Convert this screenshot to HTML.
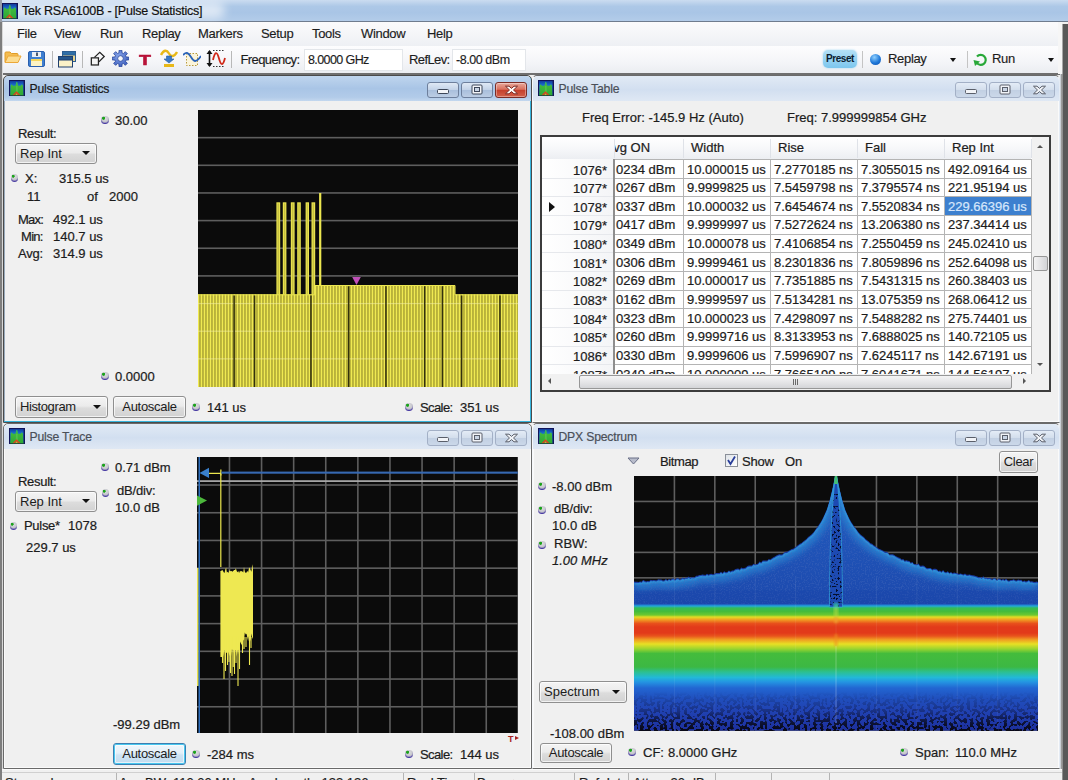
<!DOCTYPE html><html><head><meta charset="utf-8"><title>Tek RSA6100B - [Pulse Statistics]</title><style>
*{box-sizing:border-box;margin:0;padding:0}
html,body{width:1068px;height:780px;overflow:hidden;background:#f0f0f0}
body{position:relative;font-family:"Liberation Sans",sans-serif;font-size:13px;color:#1c1c1c}
.a{position:absolute;white-space:nowrap}
.t{position:absolute;white-space:nowrap;line-height:16px;height:16px;-webkit-text-stroke-width:.22px}
.ui{font-size:13px;letter-spacing:-0.32px;-webkit-text-stroke-width:.15px}
.win{position:absolute;background:#f0f0f0;border-radius:5px 5px 0 0}
.tb{position:absolute;left:0;top:0;right:0;height:25px;border-radius:5px 5px 0 0}
.wt{position:absolute;left:25.500px;top:5px;font-size:12.200px;line-height:17px;letter-spacing:-0.18px;-webkit-text-stroke:.2px currentColor}
.btn{letter-spacing:-0.3px;position:absolute;border:1px solid #8f8f8f;border-radius:3px;background:linear-gradient(#f4f4f4,#ebebeb 45%,#dcdcdc 55%,#d2d2d2);font-size:13px;line-height:18px;text-align:center;box-shadow:inset 0 0 0 1px rgba(255,255,255,.7)}
.cmb{position:absolute;border:1px solid #8f8f8f;border-radius:3px;background:linear-gradient(#f4f4f4,#ebebeb 45%,#dcdcdc 55%,#d2d2d2);font-size:13px;line-height:18px;padding-left:4px;box-shadow:inset 0 0 0 1px rgba(255,255,255,.7)}
.cmb i{position:absolute;right:6px;top:8px;width:0;height:0;border-left:4px solid transparent;border-right:4px solid transparent;border-top:4px solid #111}
.k{position:absolute;width:7.600px;height:8.200px;border-radius:50%;background:radial-gradient(circle at 32% 28%,#18a018 0,#22a422 15%,rgba(34,164,34,0) 24%),radial-gradient(circle at 50% 32%,#dcdce0 0,#c6c6cc 48%,#8c86b8 62%,#4a3ca4 74%,#4a3ca4 100%)}
.cb{position:absolute;border:1px solid #a3b0c6;border-radius:3px;height:16.500px;background:linear-gradient(#e4ecf6,#d3deec 48%,#c2d0e3 52%,#cbd8e9)}
</style></head><body>
<div class="a" style="left:0;top:0;width:1068px;height:22px;background:linear-gradient(#cbdcf0,#adc8e7 30%,#a9c5e6 60%,#b3cce9);border-bottom:1px solid #6f7c8e"></div>
<div class="a" style="left:-10px;top:2px;width:235px;height:17px;border-radius:9px;background:rgba(255,255,255,.6);filter:blur(5px)"></div>
<svg class="a" style="left:2px;top:3px" width="16" height="16" viewBox="0 0 16 16"><defs><linearGradient id="ig2_3" x1="0" y1="0" x2="0" y2="1"><stop offset="0" stop-color="#123c9c"/><stop offset=".3" stop-color="#1a70d0"/><stop offset="1" stop-color="#0f3c98"/></linearGradient><linearGradient id="gg2_3" x1="0" y1="0" x2="0" y2="1"><stop offset="0" stop-color="#34b868"/><stop offset=".3" stop-color="#40b83c"/><stop offset="1" stop-color="#2ea838"/></linearGradient></defs><rect width="16" height="16" fill="#12145a"/><rect x="1" y="1" width="13.600" height="14.200" fill="url(#ig2_3)"/><path d="M1.200 15.200 L1.700 5.600 L2.800 4.300 L3.900 5.700 L6.500 5.700 L7.100 2.400 L7.800 1.700 L8.500 2.400 L9.100 5.700 L11.700 5.700 L12.800 4.300 L13.900 5.600 L14.400 15.200 Z" fill="url(#gg2_3)"/><path d="M6.600 15 L7 5.800 L8.600 5.800 L9 15 Z" fill="#62cc54" opacity=".55"/><path d="M3.600 15.300 L7.500 11.200 L11.400 15.300 L9.600 15.300 L7.500 13.200 L5.400 15.300 Z" fill="#e23c1c"/><path d="M6.400 15.300 L7.500 13.600 L8.600 15.300 Z" fill="#f09030"/><rect x="1" y="15" width="14" height="1" fill="#1c5c28" opacity=".6"/></svg>
<div class="t" style="left:22px;top:3px;font-size:12.5px;letter-spacing:-0.22px;color:#111;-webkit-text-stroke:.2px #111">Tek RSA6100B - [Pulse Statistics]</div>
<div class="a" style="left:0;top:22px;width:1062px;height:24px;background:linear-gradient(#fbfbfc,#eef0f4)"></div>
<div class="t ui" style="left:17px;top:26px">File</div>
<div class="t ui" style="left:54px;top:26px">View</div>
<div class="t ui" style="left:100px;top:26px">Run</div>
<div class="t ui" style="left:142px;top:26px">Replay</div>
<div class="t ui" style="left:198px;top:26px">Markers</div>
<div class="t ui" style="left:261px;top:26px">Setup</div>
<div class="t ui" style="left:312px;top:26px">Tools</div>
<div class="t ui" style="left:361px;top:26px">Window</div>
<div class="t ui" style="left:427px;top:26px">Help</div>
<div class="a" style="left:0;top:46px;width:1062px;height:27px;background:linear-gradient(#fdfdfe,#f4f5f8 60%,#ebedf1)"></div>
<div class="a" style="left:0;top:73px;width:1062px;height:2px;background:#6f6f6f"></div>
<div class="a" style="left:0;top:0;width:1.500px;height:22px;background:#9a9fa8"></div>
<div class="a" style="left:0;top:22px;width:3px;height:758px;background:linear-gradient(90deg,#7e7e7e 0,#7e7e7e 55%,#d4d4d4 65%,#dcdcdc 100%)"></div>
<div class="a" style="left:1058px;top:22px;width:4px;height:52px;background:#f6f6f6"></div>
<div class="a" style="left:1060px;top:74px;width:3px;height:706px;background:linear-gradient(90deg,#e6edf6,#9c9c9c 45%,#8a8a8a)"></div>
<div class="a" style="left:1062px;top:24px;width:2px;height:50px;background:#a8a8a8"></div>
<div class="a" style="left:1063px;top:24px;width:5px;height:756px;background:#595959"></div>
<svg class="a" style="left:4px;top:50px" width="18" height="14" viewBox="0 0 18 14"><path d="M1 12 L1 3 Q1 2 2 2 L6 2 L7.5 3.5 L13 3.5 Q14 3.5 14 4.5 L14 6" fill="#f4bc50" stroke="#e09c28" stroke-width="1"/><path d="M1 12.5 L4 6 L17 6 L14 12.5 Z" fill="#fcdc90" stroke="#eca838" stroke-width="1" stroke-linejoin="round"/></svg>
<svg class="a" style="left:28px;top:51px" width="17" height="16" viewBox="0 0 17 16"><rect x=".5" y=".5" width="16" height="15" rx="1.5" fill="#3f7fd0" stroke="#2a5fae"/><rect x="4" y="1" width="9" height="5" fill="#e8eef6"/><rect x="8" y="1.5" width="2" height="3.5" fill="#4a5a70"/><rect x="3" y="8" width="11" height="7" fill="#fdf3c4"/><rect x="3" y="8" width="11" height="2" fill="#f5d65a"/></svg>
<div class="a" style="left:52px;top:51px;width:1px;height:17px;background:#b8b8b8"></div>
<svg class="a" style="left:58px;top:51px" width="18" height="17" viewBox="0 0 18 17"><rect x="4.5" y=".5" width="13" height="10" fill="#e9d690" stroke="#2d5e92"/><rect x="4.5" y=".5" width="13" height="3.5" fill="#2f6fa8" stroke="#2d5e92"/><rect x=".5" y="5.500" width="14" height="10.500" fill="#fbf1c8" stroke="#1e3f6e"/><rect x=".5" y="5.500" width="14" height="3.500" fill="#24558c" stroke="#1e3f6e"/></svg>
<div class="a" style="left:82px;top:51px;width:1px;height:17px;background:#b8b8b8"></div>
<svg class="a" style="left:90px;top:51px" width="16" height="15.5" viewBox="0 0 18 17"><rect x="1.500" y="7.500" width="8" height="8" fill="#f4f4f4" stroke="#222" stroke-width="1.400"/><path d="M5 7 L11 1.200 L16 6 L10 12" fill="none" stroke="#222" stroke-width="1.400"/></svg>
<svg class="a" style="left:112px;top:50px" width="17" height="17" viewBox="0 0 17 17"><defs><radialGradient id="gg" cx=".4" cy=".35" r=".8"><stop offset="0" stop-color="#86a4ea"/><stop offset="1" stop-color="#3052b4"/></radialGradient></defs><path d="M16.78 7.08 L16.78 9.92 L14.09 10.05 L13.55 11.36 L15.36 13.35 L13.35 15.36 L11.36 13.55 L10.05 14.09 L9.92 16.78 L7.08 16.78 L6.95 14.09 L5.64 13.55 L3.65 15.36 L1.64 13.35 L3.45 11.36 L2.91 10.05 L0.22 9.92 L0.22 7.08 L2.91 6.95 L3.45 5.64 L1.64 3.65 L3.65 1.64 L5.64 3.45 L6.95 2.91 L7.08 0.22 L9.92 0.22 L10.05 2.91 L11.36 3.45 L13.35 1.64 L15.36 3.65 L13.55 5.64 L14.09 6.95 Z" fill="url(#gg)" stroke="#27459a" stroke-width=".8"/><circle cx="8.500" cy="8.500" r="2.800" fill="#f4f6fa" stroke="#27459a" stroke-width=".8"/></svg>
<div class="a" style="left:139px;top:51px;font-size:14.500px;font-weight:bold;color:#b81238;line-height:18px;transform:scaleX(1.35);transform-origin:0 0;-webkit-text-stroke:.5px #b81238">T</div>
<svg class="a" style="left:160px;top:49px" width="18" height="19" viewBox="0 0 18 19"><path d="M1 6 C4 0 7 1 9 4.500 S14 8 17 3" fill="none" stroke="#e8b818" stroke-width="2.400"/><path d="M6.500 7 L11.500 7 L11.500 10 L14 10 L9 14 L4 10 L6.500 10 Z" fill="#3a78c8" stroke="#245a9c" stroke-width=".6"/><rect x="4" y="15" width="10" height="3" fill="#e8b818"/></svg>
<svg class="a" style="left:183px;top:50px" width="18" height="17" viewBox="0 0 18 17"><rect x="3.500" y="3.500" width="11" height="12" fill="#fbf4da" stroke="#b89a3a" stroke-dasharray="1.500 1.500"/><path d="M0 5 C3 2 5 2 8 7 S13 13 18 6" fill="none" stroke="#2a62b8" stroke-width="1.800"/></svg>
<svg class="a" style="left:206px;top:49px" width="20" height="19" viewBox="0 0 20 19"><path d="M3.500 2 L3.500 17" stroke="#111" stroke-width="1.600"/><path d="M0.500 5 L3.500 1 L6.500 5 Z M0.500 14 L3.500 18 L6.500 14 Z" fill="#111"/><path d="M7 1.500 L19 1.500 M7 17.500 L19 17.500" stroke="#333" stroke-dasharray="1.500 1.500"/><path d="M7 11 C9 2 11 2 13 9.500 S17 17 19 9" fill="none" stroke="#d02818" stroke-width="1.800"/></svg>
<div class="a" style="left:231px;top:51px;width:1px;height:17px;background:#b8b8b8"></div>
<div class="t ui" style="left:240.500px;top:51.500px;letter-spacing:-0.6px">Frequency:</div>
<div class="a" style="left:304px;top:49px;width:99px;height:22px;background:#fff;border:1px solid #e3e6ea"></div>
<div class="t ui" style="left:308px;top:52px;font-size:12.500px;letter-spacing:-0.6px">8.0000 GHz</div>
<div class="t ui" style="left:409px;top:51.500px;letter-spacing:-0.6px">RefLev:</div>
<div class="a" style="left:452px;top:49px;width:74px;height:22px;background:#fff;border:1px solid #e3e6ea"></div>
<div class="t ui" style="left:456px;top:52px;font-size:12.500px;letter-spacing:-0.45px">-8.00 dBm</div>
<div class="a" style="left:823px;top:50px;width:34px;height:18px;border-radius:5px;background:linear-gradient(#b4e0f6,#7cc6ee);box-shadow:0 0 2px #9ad4f2;font-size:10px;font-weight:bold;line-height:18px;text-align:center;color:#0c1c30;letter-spacing:-0.45px">Preset</div>
<div class="a" style="left:862px;top:51px;width:1px;height:17px;background:#c4c4c4"></div>
<div class="a" style="left:870px;top:54px;width:11px;height:11px;border-radius:50%;background:radial-gradient(circle at 40% 30%,#8fd0ff,#1f78d8 55%,#0c4fae)"></div>
<div class="t ui" style="left:888px;top:51px">Replay</div>
<div class="a" style="left:950px;top:58px;width:0;height:0;border-left:3.500px solid transparent;border-right:3.500px solid transparent;border-top:4px solid #111"></div>
<div class="a" style="left:967px;top:51px;width:1px;height:17px;background:#c4c4c4"></div>
<svg class="a" style="left:973px;top:52px" width="15" height="15" viewBox="0 0 15 15"><path d="M3.500 10.500 A5 5 0 1 0 4 4.500" fill="none" stroke="#28a838" stroke-width="2.200"/><path d="M0.500 8 L7 9.500 L2 14 Z" fill="#28a838"/></svg>
<div class="t ui" style="left:992px;top:51px">Run</div>
<div class="a" style="left:1048px;top:58px;width:0;height:0;border-left:3.500px solid transparent;border-right:3.500px solid transparent;border-top:4px solid #111"></div>
<div class="win" style="left:3px;top:75px;width:529px;height:347.7px;border:1px solid #4a4a4a;box-shadow:inset -1px -1px 0 #36b4dc, inset 1px 0 0 #9ab;"><div class="tb" style="background:linear-gradient(#bfd5ee,#a9c5e6 50%,#b2cbe9 85%,#c3d7ee)"></div><svg class="a" style="left:4.5px;top:4px" width="16" height="16" viewBox="0 0 16 16"><defs><linearGradient id="ig4.5_4" x1="0" y1="0" x2="0" y2="1"><stop offset="0" stop-color="#123c9c"/><stop offset=".3" stop-color="#1a70d0"/><stop offset="1" stop-color="#0f3c98"/></linearGradient><linearGradient id="gg4.5_4" x1="0" y1="0" x2="0" y2="1"><stop offset="0" stop-color="#34b868"/><stop offset=".3" stop-color="#40b83c"/><stop offset="1" stop-color="#2ea838"/></linearGradient></defs><rect width="16" height="16" fill="#12145a"/><rect x="1" y="1" width="13.600" height="14.200" fill="url(#ig4.5_4)"/><path d="M1.200 15.200 L1.700 5.600 L2.800 4.300 L3.900 5.700 L6.500 5.700 L7.100 2.400 L7.800 1.700 L8.500 2.400 L9.100 5.700 L11.700 5.700 L12.800 4.300 L13.900 5.600 L14.400 15.200 Z" fill="url(#gg4.5_4)"/><path d="M6.600 15 L7 5.800 L8.600 5.800 L9 15 Z" fill="#62cc54" opacity=".55"/><path d="M3.600 15.300 L7.500 11.200 L11.400 15.300 L9.600 15.300 L7.500 13.200 L5.400 15.300 Z" fill="#e23c1c"/><path d="M6.400 15.300 L7.500 13.600 L8.600 15.300 Z" fill="#f09030"/><rect x="1" y="15" width="14" height="1" fill="#1c5c28" opacity=".6"/></svg><div class="wt" style="color:#1a1a1a">Pulse Statistics</div><div class="cb" style="left:423.0px;top:5.5px;width:31.500px;border-color:#6d7f9c;background:linear-gradient(#dfe9f5,#c3d3e8 48%,#a9bfdc 52%,#bccde4)"></div><div class="cb" style="left:457.0px;top:5.5px;width:31.500px;border-color:#6d7f9c;background:linear-gradient(#dfe9f5,#c3d3e8 48%,#a9bfdc 52%,#bccde4)"></div><div class="a" style="left:491.0px;top:5.5px;width:31.500px;height:16.500px;border:1px solid #7a2b25;border-radius:3px;background:linear-gradient(#e9a99c,#d9705e 45%,#c5402c 52%,#d2604a);box-shadow:inset 0 0 0 1px rgba(255,255,255,.35)"></div><svg class="a" style="left:433.0px;top:13.0px" width="12" height="5" viewBox="0 0 12 5"><rect x=".5" y=".5" width="11" height="4" rx="1" fill="#f2f4f8" stroke="#3c4658"/></svg><svg class="a" style="left:467.0px;top:8.0px" width="12" height="11" viewBox="0 0 12 11"><rect x="1" y="1" width="10" height="9" rx="1" fill="#f2f4f8" stroke="#3c4658"/><rect x="3.500" y="3.500" width="5" height="4" fill="#c9d4e4" stroke="#3c4658"/></svg><svg class="a" style="left:499.5px;top:7.7px" width="15" height="12" viewBox="0 0 15 12"><path d="M1.500 2.200 L5 2.200 L7.500 4.400 L10 2.200 L13.500 2.200 L9.500 6 L13.500 9.800 L10 9.800 L7.500 7.600 L5 9.800 L1.500 9.800 L5.500 6 Z" fill="#fff" stroke="#7a2b25" stroke-width="1" stroke-linejoin="round"/></svg></div>
<div class="win" style="left:532px;top:75px;width:528px;height:347.7px;border:1px solid #6a6a6a;box-shadow:inset -1px -1px 0 #fafafa, inset 1px 0 0 #fafafa;border-left-color:#f6f8fb;border-right-color:#e4ebf4;"><div class="tb" style="background:linear-gradient(#e1eaf5,#d2dff0 55%,#dfe8f4)"></div><svg class="a" style="left:4.5px;top:4px" width="16" height="16" viewBox="0 0 16 16"><defs><linearGradient id="ig4.5_4" x1="0" y1="0" x2="0" y2="1"><stop offset="0" stop-color="#123c9c"/><stop offset=".3" stop-color="#1a70d0"/><stop offset="1" stop-color="#0f3c98"/></linearGradient><linearGradient id="gg4.5_4" x1="0" y1="0" x2="0" y2="1"><stop offset="0" stop-color="#34b868"/><stop offset=".3" stop-color="#40b83c"/><stop offset="1" stop-color="#2ea838"/></linearGradient></defs><rect width="16" height="16" fill="#12145a"/><rect x="1" y="1" width="13.600" height="14.200" fill="url(#ig4.5_4)"/><path d="M1.200 15.200 L1.700 5.600 L2.800 4.300 L3.900 5.700 L6.500 5.700 L7.100 2.400 L7.800 1.700 L8.500 2.400 L9.100 5.700 L11.700 5.700 L12.800 4.300 L13.900 5.600 L14.400 15.200 Z" fill="url(#gg4.5_4)"/><path d="M6.600 15 L7 5.800 L8.600 5.800 L9 15 Z" fill="#62cc54" opacity=".55"/><path d="M3.600 15.300 L7.500 11.200 L11.400 15.300 L9.600 15.300 L7.500 13.200 L5.400 15.300 Z" fill="#e23c1c"/><path d="M6.400 15.300 L7.500 13.600 L8.600 15.300 Z" fill="#f09030"/><rect x="1" y="15" width="14" height="1" fill="#1c5c28" opacity=".6"/></svg><div class="wt" style="color:#4a4f58">Pulse Table</div><div class="cb" style="left:422.0px;top:5.5px;width:31.500px"></div><div class="cb" style="left:456.0px;top:5.5px;width:31.500px"></div><div class="cb" style="left:490.0px;top:5.5px;width:31.500px"></div><svg class="a" style="left:432.0px;top:13.0px" width="12" height="5" viewBox="0 0 12 5"><rect x=".5" y=".5" width="11" height="4" rx="1" fill="#f2f4f8" stroke="#5a5f6a"/></svg><svg class="a" style="left:466.0px;top:8.0px" width="12" height="11" viewBox="0 0 12 11"><rect x="1" y="1" width="10" height="9" rx="1" fill="#f2f4f8" stroke="#5a5f6a"/><rect x="3.500" y="3.500" width="5" height="4" fill="#c9d4e4" stroke="#5a5f6a"/></svg><svg class="a" style="left:498.5px;top:7.7px" width="15" height="12" viewBox="0 0 15 12"><path d="M1.500 2.200 L5 2.200 L7.500 4.400 L10 2.200 L13.500 2.200 L9.500 6 L13.500 9.800 L10 9.800 L7.500 7.600 L5 9.800 L1.500 9.800 L5.500 6 Z" fill="#f2f4f8" stroke="#5a5f6a" stroke-width="1" stroke-linejoin="round"/></svg></div>
<div class="win" style="left:3px;top:423px;width:529px;height:346.2px;border:1px solid #6a6a6a;box-shadow:inset -1px -1px 0 #fafafa, inset 1px 0 0 #fafafa;"><div class="tb" style="background:linear-gradient(#e1eaf5,#d2dff0 55%,#dfe8f4)"></div><svg class="a" style="left:4.5px;top:4px" width="16" height="16" viewBox="0 0 16 16"><defs><linearGradient id="ig4.5_4" x1="0" y1="0" x2="0" y2="1"><stop offset="0" stop-color="#123c9c"/><stop offset=".3" stop-color="#1a70d0"/><stop offset="1" stop-color="#0f3c98"/></linearGradient><linearGradient id="gg4.5_4" x1="0" y1="0" x2="0" y2="1"><stop offset="0" stop-color="#34b868"/><stop offset=".3" stop-color="#40b83c"/><stop offset="1" stop-color="#2ea838"/></linearGradient></defs><rect width="16" height="16" fill="#12145a"/><rect x="1" y="1" width="13.600" height="14.200" fill="url(#ig4.5_4)"/><path d="M1.200 15.200 L1.700 5.600 L2.800 4.300 L3.900 5.700 L6.500 5.700 L7.100 2.400 L7.800 1.700 L8.500 2.400 L9.100 5.700 L11.700 5.700 L12.800 4.300 L13.900 5.600 L14.400 15.200 Z" fill="url(#gg4.5_4)"/><path d="M6.600 15 L7 5.800 L8.600 5.800 L9 15 Z" fill="#62cc54" opacity=".55"/><path d="M3.600 15.300 L7.500 11.200 L11.400 15.300 L9.600 15.300 L7.500 13.200 L5.400 15.300 Z" fill="#e23c1c"/><path d="M6.400 15.300 L7.500 13.600 L8.600 15.300 Z" fill="#f09030"/><rect x="1" y="15" width="14" height="1" fill="#1c5c28" opacity=".6"/></svg><div class="wt" style="color:#4a4f58">Pulse Trace</div><div class="cb" style="left:423.0px;top:5.5px;width:31.500px"></div><div class="cb" style="left:457.0px;top:5.5px;width:31.500px"></div><div class="cb" style="left:491.0px;top:5.5px;width:31.500px"></div><svg class="a" style="left:433.0px;top:13.0px" width="12" height="5" viewBox="0 0 12 5"><rect x=".5" y=".5" width="11" height="4" rx="1" fill="#f2f4f8" stroke="#5a5f6a"/></svg><svg class="a" style="left:467.0px;top:8.0px" width="12" height="11" viewBox="0 0 12 11"><rect x="1" y="1" width="10" height="9" rx="1" fill="#f2f4f8" stroke="#5a5f6a"/><rect x="3.500" y="3.500" width="5" height="4" fill="#c9d4e4" stroke="#5a5f6a"/></svg><svg class="a" style="left:499.5px;top:7.7px" width="15" height="12" viewBox="0 0 15 12"><path d="M1.500 2.200 L5 2.200 L7.500 4.400 L10 2.200 L13.500 2.200 L9.500 6 L13.500 9.800 L10 9.800 L7.500 7.600 L5 9.800 L1.500 9.800 L5.500 6 Z" fill="#f2f4f8" stroke="#5a5f6a" stroke-width="1" stroke-linejoin="round"/></svg></div>
<div class="win" style="left:532px;top:423px;width:528px;height:346.2px;border:1px solid #6a6a6a;box-shadow:inset -1px -1px 0 #fafafa, inset 1px 0 0 #fafafa;border-left-color:#f6f8fb;border-right-color:#e4ebf4;"><div class="tb" style="background:linear-gradient(#e1eaf5,#d2dff0 55%,#dfe8f4)"></div><svg class="a" style="left:4.5px;top:4px" width="16" height="16" viewBox="0 0 16 16"><defs><linearGradient id="ig4.5_4" x1="0" y1="0" x2="0" y2="1"><stop offset="0" stop-color="#123c9c"/><stop offset=".3" stop-color="#1a70d0"/><stop offset="1" stop-color="#0f3c98"/></linearGradient><linearGradient id="gg4.5_4" x1="0" y1="0" x2="0" y2="1"><stop offset="0" stop-color="#34b868"/><stop offset=".3" stop-color="#40b83c"/><stop offset="1" stop-color="#2ea838"/></linearGradient></defs><rect width="16" height="16" fill="#12145a"/><rect x="1" y="1" width="13.600" height="14.200" fill="url(#ig4.5_4)"/><path d="M1.200 15.200 L1.700 5.600 L2.800 4.300 L3.900 5.700 L6.500 5.700 L7.100 2.400 L7.800 1.700 L8.500 2.400 L9.100 5.700 L11.700 5.700 L12.800 4.300 L13.900 5.600 L14.400 15.200 Z" fill="url(#gg4.5_4)"/><path d="M6.600 15 L7 5.800 L8.600 5.800 L9 15 Z" fill="#62cc54" opacity=".55"/><path d="M3.600 15.300 L7.500 11.200 L11.400 15.300 L9.600 15.300 L7.500 13.200 L5.400 15.300 Z" fill="#e23c1c"/><path d="M6.400 15.300 L7.500 13.600 L8.600 15.300 Z" fill="#f09030"/><rect x="1" y="15" width="14" height="1" fill="#1c5c28" opacity=".6"/></svg><div class="wt" style="color:#4a4f58">DPX Spectrum</div><div class="cb" style="left:422.0px;top:5.5px;width:31.500px"></div><div class="cb" style="left:456.0px;top:5.5px;width:31.500px"></div><div class="cb" style="left:490.0px;top:5.5px;width:31.500px"></div><svg class="a" style="left:432.0px;top:13.0px" width="12" height="5" viewBox="0 0 12 5"><rect x=".5" y=".5" width="11" height="4" rx="1" fill="#f2f4f8" stroke="#5a5f6a"/></svg><svg class="a" style="left:466.0px;top:8.0px" width="12" height="11" viewBox="0 0 12 11"><rect x="1" y="1" width="10" height="9" rx="1" fill="#f2f4f8" stroke="#5a5f6a"/><rect x="3.500" y="3.500" width="5" height="4" fill="#c9d4e4" stroke="#5a5f6a"/></svg><svg class="a" style="left:498.5px;top:7.7px" width="15" height="12" viewBox="0 0 15 12"><path d="M1.500 2.200 L5 2.200 L7.500 4.400 L10 2.200 L13.500 2.200 L9.500 6 L13.500 9.800 L10 9.800 L7.500 7.600 L5 9.800 L1.500 9.800 L5.500 6 Z" fill="#f2f4f8" stroke="#5a5f6a" stroke-width="1" stroke-linejoin="round"/></svg></div>
<div class="k" style="left:101px;top:115.8px"></div>
<div class="t" style="left:115px;top:112.5px;">30.00</div>
<div class="t" style="left:18px;top:125.5px;letter-spacing:-0.3px">Result:</div>
<div class="cmb" style="left:15px;top:143px;width:82px;height:21px;line-height:19px">Rep Int<i style="top:7px"></i></div>
<div class="k" style="left:10.8px;top:173.8px"></div>
<div class="t" style="left:25px;top:170.5px;">X:</div>
<div class="t" style="left:59px;top:170.5px;">315.5 us</div>
<div class="t" style="left:27px;top:189px;">11</div>
<div class="t" style="left:87px;top:189px;">of</div>
<div class="t" style="left:109px;top:189px;">2000</div>
<div class="t" style="left:18px;top:212px;letter-spacing:-0.75px">Max:</div>
<div class="t" style="left:53px;top:212px;">492.1 us</div>
<div class="t" style="left:21px;top:229px;letter-spacing:-0.7px">Min:</div>
<div class="t" style="left:53px;top:229px;">140.7 us</div>
<div class="t" style="left:18px;top:245.5px;letter-spacing:-0.25px">Avg:</div>
<div class="t" style="left:53px;top:245.5px;">314.9 us</div>
<div class="k" style="left:101px;top:372.3px"></div>
<div class="t" style="left:115px;top:369px;">0.0000</div>
<div class="cmb" style="left:15px;top:396px;width:93px;height:22px;line-height:20px"><span style="letter-spacing:-0.4px">Histogram</span><i style="top:8px"></i></div>
<div class="btn" style="left:113px;top:396px;width:73px;height:22px;line-height:20px;">Autoscale</div>
<div class="k" style="left:192px;top:402.8px"></div>
<div class="t" style="left:207px;top:399.5px;">141 us</div>
<div class="k" style="left:405px;top:402.8px"></div>
<div class="t" style="left:420px;top:399.5px;letter-spacing:-0.6px">Scale:</div>
<div class="t" style="left:460px;top:399.5px;">351 us</div>
<svg class="a" style="left:198px;top:110px" width="320" height="277" viewBox="0 0 320 277"><defs><pattern id="hs" width="3" height="8" patternUnits="userSpaceOnUse" patternTransform="translate(-0.4 0)"><rect width="3" height="8" fill="#b8b23a"/><rect x="0" width="1.150" height="8" fill="#f0ea52"/></pattern></defs><rect width="320" height="277" fill="#0b0b0b"/><rect x="0" y="26.85" width="320" height="1.600" fill="#5e5e5e"/><rect x="0" y="54.50" width="320" height="1.600" fill="#5e5e5e"/><rect x="0" y="82.15" width="320" height="1.600" fill="#5e5e5e"/><rect x="0" y="109.80" width="320" height="1.600" fill="#5e5e5e"/><rect x="0" y="137.45" width="320" height="1.600" fill="#5e5e5e"/><rect x="0" y="165.10" width="320" height="1.600" fill="#5e5e5e"/><rect x="0" y="192.75" width="320" height="1.600" fill="#5e5e5e"/><rect x="0" y="220.40" width="320" height="1.600" fill="#5e5e5e"/><rect x="0" y="248.05" width="320" height="1.600" fill="#5e5e5e"/><rect x="78.4" y="92.300" width="3.80" height="95" fill="#ece650"/><rect x="79.50" y="93.400" width="1.60" height="94" fill="#c6c040"/><rect x="84.8" y="92.300" width="3.60" height="95" fill="#ece650"/><rect x="85.90" y="93.400" width="1.40" height="94" fill="#c6c040"/><rect x="92.8" y="92.300" width="3.80" height="95" fill="#ece650"/><rect x="93.90" y="93.400" width="1.60" height="94" fill="#c6c040"/><rect x="99.2" y="92.300" width="3.60" height="95" fill="#ece650"/><rect x="100.30" y="93.400" width="1.40" height="94" fill="#c6c040"/><rect x="107.6" y="92.300" width="3.40" height="95" fill="#ece650"/><rect x="108.70" y="93.400" width="1.20" height="94" fill="#c6c040"/><rect x="113.5" y="92.300" width="3.70" height="95" fill="#ece650"/><rect x="114.60" y="93.400" width="1.50" height="94" fill="#c6c040"/><rect x="121.100" y="83" width="2.200" height="100" fill="#ece650"/><rect x="0" y="184.500" width="320" height="92.5" fill="#b8b23a"/><rect x="117" y="175.200" width="140" height="10" fill="#b8b23a"/><rect x="-0.1" y="184.5" width="1.100" height="92.5" fill="#f0ea52"/><rect x="2.9" y="184.5" width="1.100" height="92.5" fill="#f0ea52"/><rect x="5.9" y="184.5" width="1.100" height="92.5" fill="#f0ea52"/><rect x="8.9" y="184.5" width="1.100" height="92.5" fill="#f0ea52"/><rect x="11.9" y="184.5" width="1.100" height="92.5" fill="#f0ea52"/><rect x="14.9" y="184.5" width="1.100" height="92.5" fill="#f0ea52"/><rect x="17.9" y="184.5" width="1.100" height="92.5" fill="#f0ea52"/><rect x="20.9" y="184.5" width="1.100" height="92.5" fill="#f0ea52"/><rect x="23.9" y="184.5" width="1.100" height="92.5" fill="#f0ea52"/><rect x="26.9" y="184.5" width="1.100" height="92.5" fill="#f0ea52"/><rect x="29.9" y="184.5" width="1.100" height="92.5" fill="#f0ea52"/><rect x="32.9" y="184.5" width="1.100" height="92.5" fill="#f0ea52"/><rect x="35.9" y="184.5" width="1.100" height="92.5" fill="#f0ea52"/><rect x="38.9" y="184.5" width="1.100" height="92.5" fill="#f0ea52"/><rect x="41.9" y="184.5" width="1.100" height="92.5" fill="#f0ea52"/><rect x="44.9" y="184.5" width="1.100" height="92.5" fill="#f0ea52"/><rect x="47.9" y="184.5" width="1.100" height="92.5" fill="#f0ea52"/><rect x="50.9" y="184.5" width="1.100" height="92.5" fill="#f0ea52"/><rect x="53.9" y="184.5" width="1.100" height="92.5" fill="#f0ea52"/><rect x="56.9" y="184.5" width="1.100" height="92.5" fill="#f0ea52"/><rect x="59.9" y="184.5" width="1.100" height="92.5" fill="#f0ea52"/><rect x="62.9" y="184.5" width="1.100" height="92.5" fill="#f0ea52"/><rect x="65.9" y="184.5" width="1.100" height="92.5" fill="#f0ea52"/><rect x="68.9" y="184.5" width="1.100" height="92.5" fill="#f0ea52"/><rect x="71.9" y="184.5" width="1.100" height="92.5" fill="#f0ea52"/><rect x="74.9" y="184.5" width="1.100" height="92.5" fill="#f0ea52"/><rect x="77.9" y="184.5" width="1.100" height="92.5" fill="#f0ea52"/><rect x="80.9" y="184.5" width="1.100" height="92.5" fill="#f0ea52"/><rect x="83.9" y="184.5" width="1.100" height="92.5" fill="#f0ea52"/><rect x="86.9" y="184.5" width="1.100" height="92.5" fill="#f0ea52"/><rect x="89.9" y="184.5" width="1.100" height="92.5" fill="#f0ea52"/><rect x="92.9" y="184.5" width="1.100" height="92.5" fill="#f0ea52"/><rect x="95.9" y="184.5" width="1.100" height="92.5" fill="#f0ea52"/><rect x="98.9" y="184.5" width="1.100" height="92.5" fill="#f0ea52"/><rect x="101.9" y="184.5" width="1.100" height="92.5" fill="#f0ea52"/><rect x="104.9" y="184.5" width="1.100" height="92.5" fill="#f0ea52"/><rect x="107.9" y="184.5" width="1.100" height="92.5" fill="#f0ea52"/><rect x="110.9" y="184.5" width="1.100" height="92.5" fill="#f0ea52"/><rect x="113.9" y="184.5" width="1.100" height="92.5" fill="#f0ea52"/><rect x="116.9" y="175.2" width="1.100" height="101.8" fill="#f0ea52"/><rect x="119.9" y="175.2" width="1.100" height="101.8" fill="#f0ea52"/><rect x="122.9" y="175.2" width="1.100" height="101.8" fill="#f0ea52"/><rect x="125.9" y="175.2" width="1.100" height="101.8" fill="#f0ea52"/><rect x="128.9" y="175.2" width="1.100" height="101.8" fill="#f0ea52"/><rect x="131.9" y="175.2" width="1.100" height="101.8" fill="#f0ea52"/><rect x="134.9" y="175.2" width="1.100" height="101.8" fill="#f0ea52"/><rect x="137.9" y="175.2" width="1.100" height="101.8" fill="#f0ea52"/><rect x="140.9" y="175.2" width="1.100" height="101.8" fill="#f0ea52"/><rect x="143.9" y="175.2" width="1.100" height="101.8" fill="#f0ea52"/><rect x="146.9" y="175.2" width="1.100" height="101.8" fill="#f0ea52"/><rect x="149.9" y="175.2" width="1.100" height="101.8" fill="#f0ea52"/><rect x="152.9" y="175.2" width="1.100" height="101.8" fill="#f0ea52"/><rect x="155.9" y="175.2" width="1.100" height="101.8" fill="#f0ea52"/><rect x="158.9" y="175.2" width="1.100" height="101.8" fill="#f0ea52"/><rect x="161.9" y="175.2" width="1.100" height="101.8" fill="#f0ea52"/><rect x="164.9" y="175.2" width="1.100" height="101.8" fill="#f0ea52"/><rect x="167.9" y="175.2" width="1.100" height="101.8" fill="#f0ea52"/><rect x="170.9" y="175.2" width="1.100" height="101.8" fill="#f0ea52"/><rect x="173.9" y="175.2" width="1.100" height="101.8" fill="#f0ea52"/><rect x="176.9" y="175.2" width="1.100" height="101.8" fill="#f0ea52"/><rect x="179.9" y="175.2" width="1.100" height="101.8" fill="#f0ea52"/><rect x="182.9" y="175.2" width="1.100" height="101.8" fill="#f0ea52"/><rect x="185.9" y="175.2" width="1.100" height="101.8" fill="#f0ea52"/><rect x="188.9" y="175.2" width="1.100" height="101.8" fill="#f0ea52"/><rect x="191.9" y="175.2" width="1.100" height="101.8" fill="#f0ea52"/><rect x="194.9" y="175.2" width="1.100" height="101.8" fill="#f0ea52"/><rect x="197.9" y="175.2" width="1.100" height="101.8" fill="#f0ea52"/><rect x="200.9" y="175.2" width="1.100" height="101.8" fill="#f0ea52"/><rect x="203.9" y="175.2" width="1.100" height="101.8" fill="#f0ea52"/><rect x="206.9" y="175.2" width="1.100" height="101.8" fill="#f0ea52"/><rect x="209.9" y="175.2" width="1.100" height="101.8" fill="#f0ea52"/><rect x="212.9" y="175.2" width="1.100" height="101.8" fill="#f0ea52"/><rect x="215.9" y="175.2" width="1.100" height="101.8" fill="#f0ea52"/><rect x="218.9" y="175.2" width="1.100" height="101.8" fill="#f0ea52"/><rect x="221.9" y="175.2" width="1.100" height="101.8" fill="#f0ea52"/><rect x="224.9" y="175.2" width="1.100" height="101.8" fill="#f0ea52"/><rect x="227.9" y="175.2" width="1.100" height="101.8" fill="#f0ea52"/><rect x="230.9" y="175.2" width="1.100" height="101.8" fill="#f0ea52"/><rect x="233.9" y="175.2" width="1.100" height="101.8" fill="#f0ea52"/><rect x="236.9" y="175.2" width="1.100" height="101.8" fill="#f0ea52"/><rect x="239.9" y="175.2" width="1.100" height="101.8" fill="#f0ea52"/><rect x="242.9" y="175.2" width="1.100" height="101.8" fill="#f0ea52"/><rect x="245.9" y="175.2" width="1.100" height="101.8" fill="#f0ea52"/><rect x="248.9" y="175.2" width="1.100" height="101.8" fill="#f0ea52"/><rect x="251.9" y="175.2" width="1.100" height="101.8" fill="#f0ea52"/><rect x="254.9" y="175.2" width="1.100" height="101.8" fill="#f0ea52"/><rect x="257.9" y="184.5" width="1.100" height="92.5" fill="#f0ea52"/><rect x="260.9" y="184.5" width="1.100" height="92.5" fill="#f0ea52"/><rect x="263.9" y="184.5" width="1.100" height="92.5" fill="#f0ea52"/><rect x="266.9" y="184.5" width="1.100" height="92.5" fill="#f0ea52"/><rect x="269.9" y="184.5" width="1.100" height="92.5" fill="#f0ea52"/><rect x="272.9" y="184.5" width="1.100" height="92.5" fill="#f0ea52"/><rect x="275.9" y="184.5" width="1.100" height="92.5" fill="#f0ea52"/><rect x="278.9" y="184.5" width="1.100" height="92.5" fill="#f0ea52"/><rect x="281.9" y="184.5" width="1.100" height="92.5" fill="#f0ea52"/><rect x="284.9" y="184.5" width="1.100" height="92.5" fill="#f0ea52"/><rect x="287.9" y="184.5" width="1.100" height="92.5" fill="#f0ea52"/><rect x="290.9" y="184.5" width="1.100" height="92.5" fill="#f0ea52"/><rect x="293.9" y="184.5" width="1.100" height="92.5" fill="#f0ea52"/><rect x="296.9" y="184.5" width="1.100" height="92.5" fill="#f0ea52"/><rect x="299.9" y="184.5" width="1.100" height="92.5" fill="#f0ea52"/><rect x="302.9" y="184.5" width="1.100" height="92.5" fill="#f0ea52"/><rect x="305.9" y="184.5" width="1.100" height="92.5" fill="#f0ea52"/><rect x="308.9" y="184.5" width="1.100" height="92.5" fill="#f0ea52"/><rect x="311.9" y="184.5" width="1.100" height="92.5" fill="#f0ea52"/><rect x="314.9" y="184.5" width="1.100" height="92.5" fill="#f0ea52"/><rect x="317.9" y="184.5" width="1.100" height="92.5" fill="#f0ea52"/><path d="M0 184.800 H117 V175.500 H257 V184.800 H320" fill="none" stroke="#ece650" stroke-width="1"/><rect x="0" y="192.95" width="320" height="1.200" fill="#f2eea0" opacity=".55"/><rect x="0" y="220.60" width="320" height="1.200" fill="#f2eea0" opacity=".55"/><rect x="0" y="248.25" width="320" height="1.200" fill="#f2eea0" opacity=".55"/><rect x="35.4" y="185.5" width="1.500" height="91.5" fill="#33310c"/><rect x="55.8" y="185.5" width="1.500" height="91.5" fill="#33310c"/><rect x="112.2" y="185.5" width="1.500" height="91.5" fill="#33310c"/><rect x="149.9" y="176.2" width="1.500" height="100.80000000000001" fill="#33310c"/><rect x="187.2" y="176.2" width="1.500" height="100.80000000000001" fill="#33310c"/><rect x="225.9" y="176.2" width="1.500" height="100.80000000000001" fill="#33310c"/><rect x="243.6" y="176.2" width="1.500" height="100.80000000000001" fill="#33310c"/><rect x="262.9" y="185.5" width="1.500" height="91.5" fill="#33310c"/><rect x="301.2" y="185.5" width="1.500" height="91.5" fill="#33310c"/><path d="M154.200 167 L162.800 167 L158.500 175 Z" fill="#c050b8"/></svg>
<div class="k" style="left:101px;top:463.3px"></div>
<div class="t" style="left:115px;top:460px;">0.71 dBm</div>
<div class="t" style="left:18px;top:473.5px;letter-spacing:-0.3px">Result:</div>
<div class="cmb" style="left:15px;top:491px;width:82px;height:21px;line-height:19px">Rep Int<i style="top:7px"></i></div>
<div class="k" style="left:101.5px;top:489.3px"></div>
<div class="t" style="left:117px;top:482.5px;letter-spacing:-0.2px">dB/div:</div>
<div class="t" style="left:115px;top:499.5px;">10.0 dB</div>
<div class="k" style="left:9.5px;top:521.8px"></div>
<div class="t" style="left:24px;top:518px;letter-spacing:-0.3px">Pulse*</div>
<div class="t" style="left:68px;top:518px;">1078</div>
<div class="t" style="left:26px;top:539.5px;">229.7 us</div>
<div class="t" style="left:113px;top:716.5px;">-99.29 dBm</div>
<div class="btn" style="left:113px;top:743px;width:73px;height:22px;line-height:20px;border-color:#3c7fb1;box-shadow:inset 0 0 0 1px #48c8f0, inset 0 0 0 2px rgba(255,255,255,.6);background:linear-gradient(#f0f6fb,#e4f0f8 45%,#cfe4f3 55%,#c2dcef)">Autoscale</div>
<div class="k" style="left:192px;top:749.8px"></div>
<div class="t" style="left:207px;top:746.5px;">-284 ms</div>
<div class="k" style="left:405px;top:749.8px"></div>
<div class="t" style="left:420px;top:746.5px;letter-spacing:-0.6px">Scale:</div>
<div class="t" style="left:460px;top:746.5px;">144 us</div>
<div class="a" style="left:508px;top:733.500px;font-size:9px;font-weight:bold;color:#a82020;line-height:10px">T</div>
<div class="a" style="left:514.500px;top:735.500px;width:0;height:0;border-top:2.700px solid transparent;border-bottom:2.700px solid transparent;border-left:4px solid #a82020"></div>
<svg class="a" style="left:197.2px;top:457.3px" width="320.8" height="276.2" viewBox="0 0 320.8 276.2"><rect width="320.8" height="276.2" fill="#0b0b0b"/><rect x="31.66" y="0" width="1.600" height="276.2" fill="#5e5e5e"/><rect x="63.76" y="0" width="1.600" height="276.2" fill="#5e5e5e"/><rect x="95.86" y="0" width="1.600" height="276.2" fill="#5e5e5e"/><rect x="127.96" y="0" width="1.600" height="276.2" fill="#5e5e5e"/><rect x="160.06" y="0" width="1.600" height="276.2" fill="#5e5e5e"/><rect x="192.16" y="0" width="1.600" height="276.2" fill="#5e5e5e"/><rect x="224.26" y="0" width="1.600" height="276.2" fill="#5e5e5e"/><rect x="256.36" y="0" width="1.600" height="276.2" fill="#5e5e5e"/><rect x="288.46" y="0" width="1.600" height="276.2" fill="#5e5e5e"/><rect x="0" y="27.22" width="320.8" height="1.600" fill="#5e5e5e"/><rect x="0" y="54.94" width="320.8" height="1.600" fill="#5e5e5e"/><rect x="0" y="82.66" width="320.8" height="1.600" fill="#5e5e5e"/><rect x="0" y="110.38" width="320.8" height="1.600" fill="#5e5e5e"/><rect x="0" y="138.10" width="320.8" height="1.600" fill="#5e5e5e"/><rect x="0" y="165.82" width="320.8" height="1.600" fill="#5e5e5e"/><rect x="0" y="193.54" width="320.8" height="1.600" fill="#5e5e5e"/><rect x="0" y="221.26" width="320.8" height="1.600" fill="#5e5e5e"/><rect x="0" y="248.98" width="320.8" height="1.600" fill="#5e5e5e"/><rect x="0" y="23.200" width="320.8" height="1.800" fill="#a4a4a4"/><polygon points="23.4,114.1 24.2,114.1 25.0,113.1 25.8,113.5 26.7,115.3 27.5,115.9 28.3,112.6 29.1,110.6 29.9,115.4 30.7,114.8 31.5,116.0 32.4,113.3 33.2,113.9 34.0,114.2 34.8,114.1 35.6,114.7 36.4,113.7 37.3,113.0 38.1,113.1 38.9,111.2 39.7,114.0 40.5,115.3 41.3,113.9 42.1,116.0 43.0,113.7 43.8,114.5 44.6,114.1 45.4,114.6 46.2,115.4 47.0,110.1 47.8,114.6 48.7,115.9 49.5,115.4 50.3,113.7 51.1,115.5 51.9,111.6 52.7,110.5 53.6,113.0 54.4,114.8 55.2,107.2 56.0,112.1 56.0,179.8 55.2,182.0 54.4,176.4 53.6,184.8 52.7,180.7 51.9,179.5 51.1,184.2 50.3,180.6 49.5,176.8 48.7,177.6 47.8,175.4 47.0,183.8 46.2,182.4 45.4,189.5 44.6,187.4 43.8,186.2 43.0,184.5 42.1,198.2 41.3,192.8 40.5,193.7 39.7,199.8 38.9,192.9 38.1,193.5 37.3,198.4 36.4,192.9 35.6,192.7 34.8,192.6 34.0,199.3 33.2,199.7 32.4,198.1 31.5,194.5 30.7,200.0 29.9,196.0 29.1,195.5 28.3,193.5 27.5,193.3 26.7,199.9 25.8,192.7 25.0,200.0 24.2,200.0 23.4,200.0" fill="#eee852"/><rect x="24.95" y="180" width="1.100" height="26" fill="#eee852"/><rect x="26.45" y="180" width="1.100" height="42" fill="#eee852"/><rect x="27.95" y="180" width="1.100" height="34" fill="#eee852"/><rect x="29.95" y="180" width="1.100" height="28" fill="#eee852"/><rect x="31.45" y="180" width="1.100" height="25" fill="#eee852"/><rect x="32.95" y="180" width="1.100" height="36" fill="#eee852"/><rect x="34.45" y="180" width="1.100" height="39" fill="#eee852"/><rect x="35.65" y="180" width="1.100" height="30" fill="#eee852"/><rect x="36.95" y="180" width="1.100" height="37" fill="#eee852"/><rect x="38.45" y="180" width="1.100" height="26" fill="#eee852"/><rect x="40.45" y="180" width="1.100" height="49" fill="#eee852"/><rect x="41.95" y="180" width="1.100" height="32" fill="#eee852"/><rect x="44.95" y="180" width="1.100" height="16" fill="#eee852"/><rect x="46.45" y="180" width="1.100" height="12" fill="#eee852"/><rect x="48.45" y="180" width="1.100" height="10" fill="#eee852"/><rect x="51.95" y="180" width="1.100" height="28" fill="#eee852"/><rect x="53.45" y="180" width="1.100" height="11" fill="#eee852"/><path d="M11 16.400 H23.800 V110" fill="none" stroke="#ece64e" stroke-width="1.200"/><rect x="23.200" y="12.500" width="1.300" height="6" fill="#e6e04a"/><rect x="0" y="111" width="1.800" height="118" fill="#e6e04a"/><rect x="1.500" y="0" width="1.500" height="276.2" fill="#2e6fbe"/><rect x="24.400" y="14.600" width="296.40000000000003" height="2.100" fill="#3668b2"/><path d="M2.500 15.900 L12 10.700 L12 21 Z" fill="#3a80cc"/><path d="M0 38.500 L0 48.700 L10 43.600 Z" fill="#4cb83c"/></svg>
<div class="t" style="left:582px;top:109.5px;">Freq Error: -145.9 Hz (Auto)</div>
<div class="t" style="left:787px;top:109.5px;">Freq: 7.999999854 GHz</div>
<div class="a" style="left:540px;top:135px;width:511px;height:257px;background:#fff;border:2px solid #3c3c3c;overflow:hidden"><div class="a" style="left:0;top:0;width:489px;height:22px;background:linear-gradient(#ffffff,#f7f8fa 50%,#eceef2)"></div><div class="a" style="left:0;top:22px;width:72px;height:215px;background:linear-gradient(90deg,#ffffff,#f4f5f7)"></div><div class="a" style="left:403px;top:60.30px;width:86px;height:17.65px;background:#3d80cf"></div><div class="a" style="left:73px;top:3px;width:66px;height:16px;overflow:hidden"><div class="t" style="left:-1.800px;top:0">vg ON</div></div><div class="t" style="left:149px;top:3px">Width</div><div class="t" style="left:236px;top:3px">Rise</div><div class="t" style="left:323px;top:3px">Fall</div><div class="t" style="left:410px;top:3px">Rep Int</div><div class="t" style="left:0px;width:65px;text-align:right;top:25.52px">1076*</div><div class="t" style="left:74px;top:24.52px;">0234 dBm</div><div class="t" style="left:145px;top:24.52px;">10.000015 us</div><div class="t" style="left:232px;top:24.52px;">7.2770185 ns</div><div class="t" style="left:319px;top:24.52px;">7.3055015 ns</div><div class="t" style="left:406px;top:24.52px;">492.09164 us</div><div class="t" style="left:0px;width:65px;text-align:right;top:44.17px">1077*</div><div class="t" style="left:74px;top:43.17px;">0267 dBm</div><div class="t" style="left:145px;top:43.17px;">9.9999825 us</div><div class="t" style="left:232px;top:43.17px;">7.5459798 ns</div><div class="t" style="left:319px;top:43.17px;">7.3795574 ns</div><div class="t" style="left:406px;top:43.17px;">221.95194 us</div><div class="t" style="left:0px;width:65px;text-align:right;top:62.82px">1078*</div><div class="t" style="left:74px;top:61.82px;">0337 dBm</div><div class="t" style="left:145px;top:61.82px;">10.000032 us</div><div class="t" style="left:232px;top:61.82px;">7.6454674 ns</div><div class="t" style="left:319px;top:61.82px;">7.5520834 ns</div><div class="t" style="left:406px;top:61.82px;color:#d6e6fb;">229.66396 us</div><div class="t" style="left:0px;width:65px;text-align:right;top:81.47px">1079*</div><div class="t" style="left:74px;top:80.47px;">0417 dBm</div><div class="t" style="left:145px;top:80.47px;">9.9999997 us</div><div class="t" style="left:232px;top:80.47px;">7.5272624 ns</div><div class="t" style="left:319px;top:80.47px;">13.206380 ns</div><div class="t" style="left:406px;top:80.47px;">237.34414 us</div><div class="t" style="left:0px;width:65px;text-align:right;top:100.12px">1080*</div><div class="t" style="left:74px;top:99.12px;">0349 dBm</div><div class="t" style="left:145px;top:99.12px;">10.000078 us</div><div class="t" style="left:232px;top:99.12px;">7.4106854 ns</div><div class="t" style="left:319px;top:99.12px;">7.2550459 ns</div><div class="t" style="left:406px;top:99.12px;">245.02410 us</div><div class="t" style="left:0px;width:65px;text-align:right;top:118.77px">1081*</div><div class="t" style="left:74px;top:117.77px;">0306 dBm</div><div class="t" style="left:145px;top:117.77px;">9.9999461 us</div><div class="t" style="left:232px;top:117.77px;">8.2301836 ns</div><div class="t" style="left:319px;top:117.77px;">7.8059896 ns</div><div class="t" style="left:406px;top:117.77px;">252.64098 us</div><div class="t" style="left:0px;width:65px;text-align:right;top:137.42px">1082*</div><div class="t" style="left:74px;top:136.42px;">0269 dBm</div><div class="t" style="left:145px;top:136.42px;">10.000017 us</div><div class="t" style="left:232px;top:136.42px;">7.7351885 ns</div><div class="t" style="left:319px;top:136.42px;">7.5431315 ns</div><div class="t" style="left:406px;top:136.42px;">260.38403 us</div><div class="t" style="left:0px;width:65px;text-align:right;top:156.07px">1083*</div><div class="t" style="left:74px;top:155.07px;">0162 dBm</div><div class="t" style="left:145px;top:155.07px;">9.9999597 us</div><div class="t" style="left:232px;top:155.07px;">7.5134281 ns</div><div class="t" style="left:319px;top:155.07px;">13.075359 ns</div><div class="t" style="left:406px;top:155.07px;">268.06412 us</div><div class="t" style="left:0px;width:65px;text-align:right;top:174.72px">1084*</div><div class="t" style="left:74px;top:173.72px;">0323 dBm</div><div class="t" style="left:145px;top:173.72px;">10.000023 us</div><div class="t" style="left:232px;top:173.72px;">7.4298097 ns</div><div class="t" style="left:319px;top:173.72px;">7.5488282 ns</div><div class="t" style="left:406px;top:173.72px;">275.74401 us</div><div class="t" style="left:0px;width:65px;text-align:right;top:193.38px">1085*</div><div class="t" style="left:74px;top:192.38px;">0260 dBm</div><div class="t" style="left:145px;top:192.38px;">9.9999716 us</div><div class="t" style="left:232px;top:192.38px;">8.3133953 ns</div><div class="t" style="left:319px;top:192.38px;">7.6888025 ns</div><div class="t" style="left:406px;top:192.38px;">140.72105 us</div><div class="t" style="left:0px;width:65px;text-align:right;top:212.02px">1086*</div><div class="t" style="left:74px;top:211.02px;">0330 dBm</div><div class="t" style="left:145px;top:211.02px;">9.9999606 us</div><div class="t" style="left:232px;top:211.02px;">7.5996907 ns</div><div class="t" style="left:319px;top:211.02px;">7.6245117 ns</div><div class="t" style="left:406px;top:211.02px;">142.67191 us</div><div class="t" style="left:0px;width:65px;text-align:right;top:230.67px">1087*</div><div class="t" style="left:74px;top:229.67px;">0340 dBm</div><div class="t" style="left:145px;top:229.67px;">10.000009 us</div><div class="t" style="left:232px;top:229.67px;">7.7665199 ns</div><div class="t" style="left:319px;top:229.67px;">7.6041671 ns</div><div class="t" style="left:406px;top:229.67px;">144.56197 us</div><div class="a" style="left:72px;top:22.00px;width:417px;height:1px;background:#b4b4b4"></div><div class="a" style="left:72px;top:40.65px;width:417px;height:1px;background:#b4b4b4"></div><div class="a" style="left:0;top:40.65px;width:72px;height:1px;background:#e6e8ec"></div><div class="a" style="left:72px;top:59.30px;width:417px;height:1px;background:#b4b4b4"></div><div class="a" style="left:0;top:59.30px;width:72px;height:1px;background:#e6e8ec"></div><div class="a" style="left:72px;top:77.95px;width:417px;height:1px;background:#b4b4b4"></div><div class="a" style="left:0;top:77.95px;width:72px;height:1px;background:#e6e8ec"></div><div class="a" style="left:72px;top:96.60px;width:417px;height:1px;background:#b4b4b4"></div><div class="a" style="left:0;top:96.60px;width:72px;height:1px;background:#e6e8ec"></div><div class="a" style="left:72px;top:115.25px;width:417px;height:1px;background:#b4b4b4"></div><div class="a" style="left:0;top:115.25px;width:72px;height:1px;background:#e6e8ec"></div><div class="a" style="left:72px;top:133.90px;width:417px;height:1px;background:#b4b4b4"></div><div class="a" style="left:0;top:133.90px;width:72px;height:1px;background:#e6e8ec"></div><div class="a" style="left:72px;top:152.55px;width:417px;height:1px;background:#b4b4b4"></div><div class="a" style="left:0;top:152.55px;width:72px;height:1px;background:#e6e8ec"></div><div class="a" style="left:72px;top:171.20px;width:417px;height:1px;background:#b4b4b4"></div><div class="a" style="left:0;top:171.20px;width:72px;height:1px;background:#e6e8ec"></div><div class="a" style="left:72px;top:189.85px;width:417px;height:1px;background:#b4b4b4"></div><div class="a" style="left:0;top:189.85px;width:72px;height:1px;background:#e6e8ec"></div><div class="a" style="left:72px;top:208.50px;width:417px;height:1px;background:#b4b4b4"></div><div class="a" style="left:0;top:208.50px;width:72px;height:1px;background:#e6e8ec"></div><div class="a" style="left:72px;top:227.15px;width:417px;height:1px;background:#b4b4b4"></div><div class="a" style="left:0;top:227.15px;width:72px;height:1px;background:#e6e8ec"></div><div class="a" style="left:72px;top:245.80px;width:417px;height:1px;background:#b4b4b4"></div><div class="a" style="left:0;top:245.80px;width:72px;height:1px;background:#e6e8ec"></div><div class="a" style="left:72px;top:22px;width:1px;height:215px;background:#b4b4b4"></div><div class="a" style="left:72px;top:2px;width:1px;height:19px;background:#dfe2e8"></div><div class="a" style="left:141px;top:22px;width:1px;height:215px;background:#b4b4b4"></div><div class="a" style="left:141px;top:2px;width:1px;height:19px;background:#dfe2e8"></div><div class="a" style="left:228px;top:22px;width:1px;height:215px;background:#b4b4b4"></div><div class="a" style="left:228px;top:2px;width:1px;height:19px;background:#dfe2e8"></div><div class="a" style="left:315px;top:22px;width:1px;height:215px;background:#b4b4b4"></div><div class="a" style="left:315px;top:2px;width:1px;height:19px;background:#dfe2e8"></div><div class="a" style="left:402px;top:22px;width:1px;height:215px;background:#b4b4b4"></div><div class="a" style="left:402px;top:2px;width:1px;height:19px;background:#dfe2e8"></div><div class="a" style="left:489px;top:22px;width:1px;height:215px;background:#b4b4b4"></div><div class="a" style="left:489px;top:2px;width:1px;height:19px;background:#dfe2e8"></div><div class="a" style="left:71px;top:22px;width:2px;height:215px;background:#8e8e8e"></div><div class="a" style="left:7px;top:65px;width:0;height:0;border-top:5px solid transparent;border-bottom:5px solid transparent;border-left:6px solid #111"></div><div class="a" style="left:490px;top:0;width:17px;height:237px;background:#f1f1f1"></div><div class="a" style="left:495px;top:8px;width:0;height:0;border-left:3.500px solid transparent;border-right:3.500px solid transparent;border-bottom:3.500px solid #555"></div><div class="a" style="left:495px;top:226px;width:0;height:0;border-left:3.500px solid transparent;border-right:3.500px solid transparent;border-top:3.500px solid #555"></div><div class="a" style="left:491px;top:119px;width:15px;height:15px;border:1px solid #979797;border-radius:2px;background:linear-gradient(90deg,#f4f4f4,#e4e4e6 50%,#d2d3d6)"></div><div class="a" style="left:0;top:237px;width:507px;height:16px;background:#f1f1f1"></div><div class="a" style="left:6px;top:241px;width:0;height:0;border-top:3.500px solid transparent;border-bottom:3.500px solid transparent;border-right:3.500px solid #555"></div><div class="a" style="left:481px;top:241px;width:0;height:0;border-top:3.500px solid transparent;border-bottom:3.500px solid transparent;border-left:3.500px solid #555"></div><div class="a" style="left:37px;top:238px;width:433px;height:14px;border:1px solid #979797;border-radius:2px;background:linear-gradient(#f5f5f5,#e6e6e8 50%,#d4d5d8)"></div><div class="a" style="left:251px;top:242px;width:1px;height:6px;background:#6a6a6a"></div><div class="a" style="left:253px;top:242px;width:1px;height:6px;background:#6a6a6a"></div><div class="a" style="left:255px;top:242px;width:1px;height:6px;background:#6a6a6a"></div></div>
<svg class="a" style="left:627px;top:457.3px" width="13" height="8" viewBox="0 0 13 8"><path d="M1 1 L12 1 L6.500 7 Z" fill="#b8bccb" stroke="#6a7088" stroke-width="1"/></svg>
<div class="t" style="left:660px;top:454.3px;letter-spacing:-0.4px">Bitmap</div>
<div class="a" style="left:725px;top:454.300px;width:13px;height:13px;border:1px solid #8a8f98;background:linear-gradient(135deg,#dfe3e8,#ffffff)"></div>
<svg class="a" style="left:726px;top:455.3px" width="11" height="11" viewBox="0 0 11 11"><path d="M2 5 L4.500 9 L9 1.500" fill="none" stroke="#2a3e9a" stroke-width="1.800"/></svg>
<div class="t" style="left:742px;top:454.3px;letter-spacing:-0.25px">Show</div>
<div class="t" style="left:785px;top:454.3px;">On</div>
<div class="btn" style="left:999px;top:451px;width:39px;height:22px;line-height:20px;">Clear</div>
<div class="k" style="left:538px;top:482.3px"></div>
<div class="t" style="left:552px;top:478.5px;">-8.00 dBm</div>
<div class="k" style="left:538px;top:505.8px"></div>
<div class="t" style="left:554px;top:500.5px;letter-spacing:-0.2px">dB/div:</div>
<div class="t" style="left:552px;top:517.5px;">10.0 dB</div>
<div class="k" style="left:538px;top:541.3px"></div>
<div class="t" style="left:554px;top:535.5px;">RBW:</div>
<div class="t" style="left:552px;top:553px;font-style:italic">1.00 MHz</div>
<div class="cmb" style="left:539px;top:681px;width:88px;height:22px;line-height:20px">Spectrum<i style="top:8px"></i></div>
<div class="t" style="left:550px;top:725.5px;">-108.00 dBm</div>
<div class="btn" style="left:540px;top:743px;width:72px;height:20px;line-height:18px;">Autoscale</div>
<div class="k" style="left:628px;top:748.3px"></div>
<div class="t" style="left:643px;top:744.5px;">CF:</div>
<div class="t" style="left:668px;top:744.5px;">8.0000 GHz</div>
<div class="k" style="left:900px;top:748.3px"></div>
<div class="t" style="left:915px;top:744.5px;">Span:</div>
<div class="t" style="left:955px;top:744.5px;">110.0 MHz</div>
<svg class="a" style="left:634.4px;top:476.0px" width="404.1" height="254.6" viewBox="0 0 404.1 254.6"><defs>
<linearGradient id="bands" x1="0" y1="0" x2="0" y2="1"><stop offset="0.0000" stop-color="#1e50b8"/><stop offset="0.0158" stop-color="#22a8dc"/><stop offset="0.0316" stop-color="#34bc58"/><stop offset="0.0592" stop-color="#44bc3c"/><stop offset="0.0869" stop-color="#6cc830"/><stop offset="0.1027" stop-color="#e4dc24"/><stop offset="0.1264" stop-color="#f09822"/><stop offset="0.1540" stop-color="#e8501c"/><stop offset="0.1817" stop-color="#e23a1a"/><stop offset="0.2291" stop-color="#e23a1a"/><stop offset="0.2528" stop-color="#e8541c"/><stop offset="0.2804" stop-color="#f09a22"/><stop offset="0.3160" stop-color="#e8e024"/><stop offset="0.3555" stop-color="#98d430"/><stop offset="0.3910" stop-color="#44bc3c"/><stop offset="0.4976" stop-color="#3cb844"/><stop offset="0.5371" stop-color="#2cc090"/><stop offset="0.5806" stop-color="#22b8d8"/><stop offset="0.6161" stop-color="#2494e2"/><stop offset="0.6635" stop-color="#2266d2"/><stop offset="0.7504" stop-color="#204ebc"/><stop offset="0.8452" stop-color="#2042b2"/><stop offset="0.9321" stop-color="#1e38a8"/><stop offset="1.0000" stop-color="#1c2e9a"/></linearGradient>
<filter id="bl3" x="-5%" y="-20%" width="110%" height="140%"><feGaussianBlur stdDeviation="3.2"/></filter>
<filter id="bl1" x="-5%" y="-20%" width="110%" height="140%"><feGaussianBlur stdDeviation="1.1"/></filter>
<filter id="spk" x="0" y="0" width="100%" height="100%" color-interpolation-filters="sRGB"><feTurbulence type="fractalNoise" baseFrequency="0.3" numOctaves="1" seed="4"/><feColorMatrix type="matrix" values="0 0 0 0 0.03  0 0 0 0 0.03  0 0 0 0 0.08  40 0 0 0 -20.2"/></filter>
<filter id="spk3" x="0" y="0" width="100%" height="100%" color-interpolation-filters="sRGB"><feTurbulence type="fractalNoise" baseFrequency="0.5" numOctaves="2" seed="14"/><feColorMatrix type="matrix" values="0 0 0 0 0  0 0 0 0 0  0 0 0 0 0.05  10 0 0 0 -5.5"/></filter>
<filter id="spk2" x="0" y="0" width="100%" height="100%"><feTurbulence type="fractalNoise" baseFrequency="0.7" numOctaves="2" seed="9"/><feColorMatrix type="matrix" values="0 0 0 0 0.06  0 0 0 0 0.14  0 0 0 0 0.5  6 0 0 0 -3.0"/></filter>
<linearGradient id="fade" x1="0" y1="0" x2="0" y2="1"><stop offset="0" stop-color="#fff" stop-opacity="0"/><stop offset=".5" stop-color="#fff" stop-opacity=".3"/><stop offset=".78" stop-color="#fff" stop-opacity=".75"/><stop offset="1" stop-color="#fff" stop-opacity="1"/></linearGradient>
<mask id="mfade"><rect x="0" y="216" width="404.1" height="39" fill="url(#fade)"/></mask>
<clipPath id="skc"><path d="M0 131.5 L0.0 106.7 L1.5 106.9 L3.0 106.9 L4.6 107.1 L6.1 106.6 L7.6 106.9 L9.1 105.2 L10.6 105.9 L12.2 106.7 L13.7 106.1 L15.2 106.5 L16.7 105.0 L18.2 105.5 L19.8 105.1 L21.3 105.5 L22.8 105.5 L24.3 104.4 L25.8 104.7 L27.4 104.7 L28.9 105.8 L30.4 105.5 L31.9 104.3 L33.4 105.4 L35.0 104.1 L36.5 104.9 L38.0 103.9 L39.5 103.5 L41.0 104.9 L42.6 103.5 L44.1 103.3 L45.6 104.4 L47.1 104.0 L48.6 102.8 L50.2 103.8 L51.7 102.8 L53.2 102.9 L54.7 101.8 L56.2 102.9 L57.8 102.3 L59.3 102.6 L60.8 102.2 L62.3 101.0 L63.8 100.9 L65.4 100.3 L66.9 100.1 L68.4 99.7 L69.9 100.0 L71.4 100.3 L73.0 99.0 L74.5 100.0 L76.0 99.2 L77.6 98.9 L79.1 99.6 L80.7 98.7 L82.3 98.2 L83.9 98.2 L85.4 98.3 L87.0 96.9 L88.6 98.3 L90.2 96.4 L91.7 97.4 L93.3 97.3 L94.9 95.6 L96.5 96.7 L98.0 95.7 L99.6 95.8 L101.1 94.4 L102.7 94.0 L104.2 93.7 L105.7 94.7 L107.3 92.8 L108.8 93.4 L110.3 93.2 L111.8 92.8 L113.4 91.3 L114.9 90.8 L116.4 90.7 L118.0 90.7 L119.5 89.0 L121.0 89.6 L122.6 89.2 L124.1 88.8 L125.6 86.7 L127.2 87.8 L128.7 85.8 L130.2 85.7 L131.7 85.7 L133.3 85.7 L134.8 84.1 L136.3 84.6 L137.9 83.4 L139.4 82.5 L140.9 81.8 L142.4 80.8 L144.0 80.0 L145.5 79.4 L147.0 79.7 L148.5 79.5 L150.1 77.8 L151.6 77.0 L153.1 76.9 L154.6 75.9 L156.2 75.1 L157.7 74.3 L159.2 73.9 L160.9 72.8 L162.5 71.5 L164.2 70.3 L165.9 68.9 L167.5 68.3 L169.2 66.6 L170.8 65.4 L172.5 64.1 L174.1 62.2 L175.8 61.0 L177.4 59.7 L179.1 58.0 L180.6 56.1 L182.1 53.7 L183.6 51.9 L185.1 49.8 L187.1 46.7 L189.1 42.9 L191.1 38.5 L193.0 34.3 L194.5 29.2 L196.0 24.3 L198.4 14.2 L200.4 4.2 L201.2 0.0 L202.8 0.1 L203.6 4.2 L205.6 14.1 L208.0 24.3 L209.5 29.1 L211.0 34.3 L212.9 38.6 L214.9 43.0 L216.9 46.7 L218.9 49.8 L220.4 51.9 L221.9 53.6 L223.4 56.0 L224.9 58.0 L226.6 59.8 L228.2 61.0 L229.9 62.2 L231.5 64.2 L233.2 65.4 L234.8 66.7 L236.5 68.4 L238.1 68.9 L239.8 70.4 L241.5 71.4 L243.1 72.8 L244.8 73.9 L246.3 74.4 L247.8 75.1 L249.4 76.0 L250.9 76.9 L252.4 77.0 L253.9 77.6 L255.5 79.6 L257.0 79.5 L258.5 79.5 L260.0 79.9 L261.6 81.1 L263.1 81.9 L264.6 82.7 L266.1 83.3 L267.7 84.7 L269.2 84.3 L270.7 85.9 L272.3 85.5 L273.8 86.0 L275.3 86.1 L276.8 88.0 L278.4 87.1 L279.9 89.1 L281.4 89.2 L283.0 89.6 L284.5 88.7 L286.0 90.9 L287.6 91.0 L289.1 90.8 L290.6 91.4 L292.2 93.0 L293.7 93.4 L295.2 93.1 L296.7 93.1 L298.3 94.7 L299.8 93.9 L301.3 93.9 L302.9 94.5 L304.4 96.1 L306.0 95.8 L307.5 96.9 L309.1 95.2 L310.7 97.1 L312.3 97.4 L313.8 96.5 L315.4 98.1 L317.0 97.1 L318.6 98.5 L320.1 97.8 L321.7 98.1 L323.3 98.5 L324.9 99.2 L326.4 98.6 L328.0 99.1 L329.5 99.8 L331.0 98.8 L332.6 99.9 L334.1 99.9 L335.6 99.6 L337.1 100.2 L338.6 100.4 L340.2 100.7 L341.7 101.3 L343.2 101.8 L344.7 102.5 L346.2 102.1 L347.8 102.9 L349.3 101.5 L350.8 103.1 L352.3 102.7 L353.8 103.4 L355.4 102.9 L356.9 103.7 L358.4 104.5 L359.9 103.1 L361.4 103.5 L363.0 105.2 L364.5 103.8 L366.0 103.9 L367.5 105.1 L369.0 104.2 L370.6 105.3 L372.1 104.0 L373.6 105.5 L375.1 105.9 L376.6 105.1 L378.2 105.1 L379.7 104.5 L381.2 105.4 L382.7 105.8 L384.2 104.7 L385.8 105.2 L387.3 105.0 L388.8 106.6 L390.3 105.8 L391.8 106.8 L393.4 106.2 L394.9 105.1 L396.4 106.8 L397.9 106.4 L399.4 106.9 L401.0 107.3 L402.5 106.8 L404.0 107.1 L404.1 131.5 Z"/></clipPath>
<linearGradient id="sk" x1="0" y1="0" x2="0" y2="1"><stop offset="0" stop-color="#2460c2"/><stop offset=".6" stop-color="#1f52b6"/><stop offset="1" stop-color="#1c48ac"/></linearGradient>
</defs><rect width="404.1" height="254.6" fill="#0b0b0b"/><rect x="39.61" y="0" width="1.600" height="254.6" fill="#5e5e5e"/><rect x="80.02" y="0" width="1.600" height="254.6" fill="#5e5e5e"/><rect x="120.43" y="0" width="1.600" height="254.6" fill="#5e5e5e"/><rect x="160.84" y="0" width="1.600" height="254.6" fill="#5e5e5e"/><rect x="201.25" y="0" width="1.600" height="254.6" fill="#5e5e5e"/><rect x="241.66" y="0" width="1.600" height="254.6" fill="#5e5e5e"/><rect x="282.07" y="0" width="1.600" height="254.6" fill="#5e5e5e"/><rect x="322.48" y="0" width="1.600" height="254.6" fill="#5e5e5e"/><rect x="362.89" y="0" width="1.600" height="254.6" fill="#5e5e5e"/><rect x="0" y="24.66" width="404.1" height="1.600" fill="#5e5e5e"/><rect x="0" y="50.12" width="404.1" height="1.600" fill="#5e5e5e"/><rect x="0" y="75.58" width="404.1" height="1.600" fill="#5e5e5e"/><rect x="0" y="101.04" width="404.1" height="1.600" fill="#5e5e5e"/><rect x="0" y="126.50" width="404.1" height="1.600" fill="#5e5e5e"/><rect x="0" y="151.96" width="404.1" height="1.600" fill="#5e5e5e"/><rect x="0" y="177.42" width="404.1" height="1.600" fill="#5e5e5e"/><rect x="0" y="202.88" width="404.1" height="1.600" fill="#5e5e5e"/><rect x="0" y="228.34" width="404.1" height="1.600" fill="#5e5e5e"/><path d="M0 131.5 L0.0 106.7 L1.5 106.9 L3.0 106.9 L4.6 107.1 L6.1 106.6 L7.6 106.9 L9.1 105.2 L10.6 105.9 L12.2 106.7 L13.7 106.1 L15.2 106.5 L16.7 105.0 L18.2 105.5 L19.8 105.1 L21.3 105.5 L22.8 105.5 L24.3 104.4 L25.8 104.7 L27.4 104.7 L28.9 105.8 L30.4 105.5 L31.9 104.3 L33.4 105.4 L35.0 104.1 L36.5 104.9 L38.0 103.9 L39.5 103.5 L41.0 104.9 L42.6 103.5 L44.1 103.3 L45.6 104.4 L47.1 104.0 L48.6 102.8 L50.2 103.8 L51.7 102.8 L53.2 102.9 L54.7 101.8 L56.2 102.9 L57.8 102.3 L59.3 102.6 L60.8 102.2 L62.3 101.0 L63.8 100.9 L65.4 100.3 L66.9 100.1 L68.4 99.7 L69.9 100.0 L71.4 100.3 L73.0 99.0 L74.5 100.0 L76.0 99.2 L77.6 98.9 L79.1 99.6 L80.7 98.7 L82.3 98.2 L83.9 98.2 L85.4 98.3 L87.0 96.9 L88.6 98.3 L90.2 96.4 L91.7 97.4 L93.3 97.3 L94.9 95.6 L96.5 96.7 L98.0 95.7 L99.6 95.8 L101.1 94.4 L102.7 94.0 L104.2 93.7 L105.7 94.7 L107.3 92.8 L108.8 93.4 L110.3 93.2 L111.8 92.8 L113.4 91.3 L114.9 90.8 L116.4 90.7 L118.0 90.7 L119.5 89.0 L121.0 89.6 L122.6 89.2 L124.1 88.8 L125.6 86.7 L127.2 87.8 L128.7 85.8 L130.2 85.7 L131.7 85.7 L133.3 85.7 L134.8 84.1 L136.3 84.6 L137.9 83.4 L139.4 82.5 L140.9 81.8 L142.4 80.8 L144.0 80.0 L145.5 79.4 L147.0 79.7 L148.5 79.5 L150.1 77.8 L151.6 77.0 L153.1 76.9 L154.6 75.9 L156.2 75.1 L157.7 74.3 L159.2 73.9 L160.9 72.8 L162.5 71.5 L164.2 70.3 L165.9 68.9 L167.5 68.3 L169.2 66.6 L170.8 65.4 L172.5 64.1 L174.1 62.2 L175.8 61.0 L177.4 59.7 L179.1 58.0 L180.6 56.1 L182.1 53.7 L183.6 51.9 L185.1 49.8 L187.1 46.7 L189.1 42.9 L191.1 38.5 L193.0 34.3 L194.5 29.2 L196.0 24.3 L198.4 14.2 L200.4 4.2 L201.2 0.0 L202.8 0.1 L203.6 4.2 L205.6 14.1 L208.0 24.3 L209.5 29.1 L211.0 34.3 L212.9 38.6 L214.9 43.0 L216.9 46.7 L218.9 49.8 L220.4 51.9 L221.9 53.6 L223.4 56.0 L224.9 58.0 L226.6 59.8 L228.2 61.0 L229.9 62.2 L231.5 64.2 L233.2 65.4 L234.8 66.7 L236.5 68.4 L238.1 68.9 L239.8 70.4 L241.5 71.4 L243.1 72.8 L244.8 73.9 L246.3 74.4 L247.8 75.1 L249.4 76.0 L250.9 76.9 L252.4 77.0 L253.9 77.6 L255.5 79.6 L257.0 79.5 L258.5 79.5 L260.0 79.9 L261.6 81.1 L263.1 81.9 L264.6 82.7 L266.1 83.3 L267.7 84.7 L269.2 84.3 L270.7 85.9 L272.3 85.5 L273.8 86.0 L275.3 86.1 L276.8 88.0 L278.4 87.1 L279.9 89.1 L281.4 89.2 L283.0 89.6 L284.5 88.7 L286.0 90.9 L287.6 91.0 L289.1 90.8 L290.6 91.4 L292.2 93.0 L293.7 93.4 L295.2 93.1 L296.7 93.1 L298.3 94.7 L299.8 93.9 L301.3 93.9 L302.9 94.5 L304.4 96.1 L306.0 95.8 L307.5 96.9 L309.1 95.2 L310.7 97.1 L312.3 97.4 L313.8 96.5 L315.4 98.1 L317.0 97.1 L318.6 98.5 L320.1 97.8 L321.7 98.1 L323.3 98.5 L324.9 99.2 L326.4 98.6 L328.0 99.1 L329.5 99.8 L331.0 98.8 L332.6 99.9 L334.1 99.9 L335.6 99.6 L337.1 100.2 L338.6 100.4 L340.2 100.7 L341.7 101.3 L343.2 101.8 L344.7 102.5 L346.2 102.1 L347.8 102.9 L349.3 101.5 L350.8 103.1 L352.3 102.7 L353.8 103.4 L355.4 102.9 L356.9 103.7 L358.4 104.5 L359.9 103.1 L361.4 103.5 L363.0 105.2 L364.5 103.8 L366.0 103.9 L367.5 105.1 L369.0 104.2 L370.6 105.3 L372.1 104.0 L373.6 105.5 L375.1 105.9 L376.6 105.1 L378.2 105.1 L379.7 104.5 L381.2 105.4 L382.7 105.8 L384.2 104.7 L385.8 105.2 L387.3 105.0 L388.8 106.6 L390.3 105.8 L391.8 106.8 L393.4 106.2 L394.9 105.1 L396.4 106.8 L397.9 106.4 L399.4 106.9 L401.0 107.3 L402.5 106.8 L404.0 107.1 L404.1 131.5 Z" fill="#1a3ca4" transform="translate(0 -1.2)"/><g clip-path="url(#skc)"><rect x="0" y="0" width="404.1" height="131.5" fill="url(#sk)"/><path d="M0.0 106.7 L1.5 106.9 L3.0 106.9 L4.6 107.1 L6.1 106.6 L7.6 106.9 L9.1 105.2 L10.6 105.9 L12.2 106.7 L13.7 106.1 L15.2 106.5 L16.7 105.0 L18.2 105.5 L19.8 105.1 L21.3 105.5 L22.8 105.5 L24.3 104.4 L25.8 104.7 L27.4 104.7 L28.9 105.8 L30.4 105.5 L31.9 104.3 L33.4 105.4 L35.0 104.1 L36.5 104.9 L38.0 103.9 L39.5 103.5 L41.0 104.9 L42.6 103.5 L44.1 103.3 L45.6 104.4 L47.1 104.0 L48.6 102.8 L50.2 103.8 L51.7 102.8 L53.2 102.9 L54.7 101.8 L56.2 102.9 L57.8 102.3 L59.3 102.6 L60.8 102.2 L62.3 101.0 L63.8 100.9 L65.4 100.3 L66.9 100.1 L68.4 99.7 L69.9 100.0 L71.4 100.3 L73.0 99.0 L74.5 100.0 L76.0 99.2 L77.6 98.9 L79.1 99.6 L80.7 98.7 L82.3 98.2 L83.9 98.2 L85.4 98.3 L87.0 96.9 L88.6 98.3 L90.2 96.4 L91.7 97.4 L93.3 97.3 L94.9 95.6 L96.5 96.7 L98.0 95.7 L99.6 95.8 L101.1 94.4 L102.7 94.0 L104.2 93.7 L105.7 94.7 L107.3 92.8 L108.8 93.4 L110.3 93.2 L111.8 92.8 L113.4 91.3 L114.9 90.8 L116.4 90.7 L118.0 90.7 L119.5 89.0 L121.0 89.6 L122.6 89.2 L124.1 88.8 L125.6 86.7 L127.2 87.8 L128.7 85.8 L130.2 85.7 L131.7 85.7 L133.3 85.7 L134.8 84.1 L136.3 84.6 L137.9 83.4 L139.4 82.5 L140.9 81.8 L142.4 80.8 L144.0 80.0 L145.5 79.4 L147.0 79.7 L148.5 79.5 L150.1 77.8 L151.6 77.0 L153.1 76.9 L154.6 75.9 L156.2 75.1 L157.7 74.3 L159.2 73.9 L160.9 72.8 L162.5 71.5 L164.2 70.3 L165.9 68.9 L167.5 68.3 L169.2 66.6 L170.8 65.4 L172.5 64.1 L174.1 62.2 L175.8 61.0 L177.4 59.7 L179.1 58.0 L180.6 56.1 L182.1 53.7 L183.6 51.9 L185.1 49.8 L187.1 46.7 L189.1 42.9 L191.1 38.5 L193.0 34.3 L194.5 29.2 L196.0 24.3 L198.4 14.2 L200.4 4.2 L201.2 0.0 L202.8 0.1 L203.6 4.2 L205.6 14.1 L208.0 24.3 L209.5 29.1 L211.0 34.3 L212.9 38.6 L214.9 43.0 L216.9 46.7 L218.9 49.8 L220.4 51.9 L221.9 53.6 L223.4 56.0 L224.9 58.0 L226.6 59.8 L228.2 61.0 L229.9 62.2 L231.5 64.2 L233.2 65.4 L234.8 66.7 L236.5 68.4 L238.1 68.9 L239.8 70.4 L241.5 71.4 L243.1 72.8 L244.8 73.9 L246.3 74.4 L247.8 75.1 L249.4 76.0 L250.9 76.9 L252.4 77.0 L253.9 77.6 L255.5 79.6 L257.0 79.5 L258.5 79.5 L260.0 79.9 L261.6 81.1 L263.1 81.9 L264.6 82.7 L266.1 83.3 L267.7 84.7 L269.2 84.3 L270.7 85.9 L272.3 85.5 L273.8 86.0 L275.3 86.1 L276.8 88.0 L278.4 87.1 L279.9 89.1 L281.4 89.2 L283.0 89.6 L284.5 88.7 L286.0 90.9 L287.6 91.0 L289.1 90.8 L290.6 91.4 L292.2 93.0 L293.7 93.4 L295.2 93.1 L296.7 93.1 L298.3 94.7 L299.8 93.9 L301.3 93.9 L302.9 94.5 L304.4 96.1 L306.0 95.8 L307.5 96.9 L309.1 95.2 L310.7 97.1 L312.3 97.4 L313.8 96.5 L315.4 98.1 L317.0 97.1 L318.6 98.5 L320.1 97.8 L321.7 98.1 L323.3 98.5 L324.9 99.2 L326.4 98.6 L328.0 99.1 L329.5 99.8 L331.0 98.8 L332.6 99.9 L334.1 99.9 L335.6 99.6 L337.1 100.2 L338.6 100.4 L340.2 100.7 L341.7 101.3 L343.2 101.8 L344.7 102.5 L346.2 102.1 L347.8 102.9 L349.3 101.5 L350.8 103.1 L352.3 102.7 L353.8 103.4 L355.4 102.9 L356.9 103.7 L358.4 104.5 L359.9 103.1 L361.4 103.5 L363.0 105.2 L364.5 103.8 L366.0 103.9 L367.5 105.1 L369.0 104.2 L370.6 105.3 L372.1 104.0 L373.6 105.5 L375.1 105.9 L376.6 105.1 L378.2 105.1 L379.7 104.5 L381.2 105.4 L382.7 105.8 L384.2 104.7 L385.8 105.2 L387.3 105.0 L388.8 106.6 L390.3 105.8 L391.8 106.8 L393.4 106.2 L394.9 105.1 L396.4 106.8 L397.9 106.4 L399.4 106.9 L401.0 107.3 L402.5 106.8 L404.0 107.1" fill="none" stroke="#2c8cd6" stroke-width="13" filter="url(#bl3)" opacity=".72"/><path d="M0.0 106.7 L1.5 106.9 L3.0 106.9 L4.6 107.1 L6.1 106.6 L7.6 106.9 L9.1 105.2 L10.6 105.9 L12.2 106.7 L13.7 106.1 L15.2 106.5 L16.7 105.0 L18.2 105.5 L19.8 105.1 L21.3 105.5 L22.8 105.5 L24.3 104.4 L25.8 104.7 L27.4 104.7 L28.9 105.8 L30.4 105.5 L31.9 104.3 L33.4 105.4 L35.0 104.1 L36.5 104.9 L38.0 103.9 L39.5 103.5 L41.0 104.9 L42.6 103.5 L44.1 103.3 L45.6 104.4 L47.1 104.0 L48.6 102.8 L50.2 103.8 L51.7 102.8 L53.2 102.9 L54.7 101.8 L56.2 102.9 L57.8 102.3 L59.3 102.6 L60.8 102.2 L62.3 101.0 L63.8 100.9 L65.4 100.3 L66.9 100.1 L68.4 99.7 L69.9 100.0 L71.4 100.3 L73.0 99.0 L74.5 100.0 L76.0 99.2 L77.6 98.9 L79.1 99.6 L80.7 98.7 L82.3 98.2 L83.9 98.2 L85.4 98.3 L87.0 96.9 L88.6 98.3 L90.2 96.4 L91.7 97.4 L93.3 97.3 L94.9 95.6 L96.5 96.7 L98.0 95.7 L99.6 95.8 L101.1 94.4 L102.7 94.0 L104.2 93.7 L105.7 94.7 L107.3 92.8 L108.8 93.4 L110.3 93.2 L111.8 92.8 L113.4 91.3 L114.9 90.8 L116.4 90.7 L118.0 90.7 L119.5 89.0 L121.0 89.6 L122.6 89.2 L124.1 88.8 L125.6 86.7 L127.2 87.8 L128.7 85.8 L130.2 85.7 L131.7 85.7 L133.3 85.7 L134.8 84.1 L136.3 84.6 L137.9 83.4 L139.4 82.5 L140.9 81.8 L142.4 80.8 L144.0 80.0 L145.5 79.4 L147.0 79.7 L148.5 79.5 L150.1 77.8 L151.6 77.0 L153.1 76.9 L154.6 75.9 L156.2 75.1 L157.7 74.3 L159.2 73.9 L160.9 72.8 L162.5 71.5 L164.2 70.3 L165.9 68.9 L167.5 68.3 L169.2 66.6 L170.8 65.4 L172.5 64.1 L174.1 62.2 L175.8 61.0 L177.4 59.7 L179.1 58.0 L180.6 56.1 L182.1 53.7 L183.6 51.9 L185.1 49.8 L187.1 46.7 L189.1 42.9 L191.1 38.5 L193.0 34.3 L194.5 29.2 L196.0 24.3 L198.4 14.2 L200.4 4.2 L201.2 0.0 L202.8 0.1 L203.6 4.2 L205.6 14.1 L208.0 24.3 L209.5 29.1 L211.0 34.3 L212.9 38.6 L214.9 43.0 L216.9 46.7 L218.9 49.8 L220.4 51.9 L221.9 53.6 L223.4 56.0 L224.9 58.0 L226.6 59.8 L228.2 61.0 L229.9 62.2 L231.5 64.2 L233.2 65.4 L234.8 66.7 L236.5 68.4 L238.1 68.9 L239.8 70.4 L241.5 71.4 L243.1 72.8 L244.8 73.9 L246.3 74.4 L247.8 75.1 L249.4 76.0 L250.9 76.9 L252.4 77.0 L253.9 77.6 L255.5 79.6 L257.0 79.5 L258.5 79.5 L260.0 79.9 L261.6 81.1 L263.1 81.9 L264.6 82.7 L266.1 83.3 L267.7 84.7 L269.2 84.3 L270.7 85.9 L272.3 85.5 L273.8 86.0 L275.3 86.1 L276.8 88.0 L278.4 87.1 L279.9 89.1 L281.4 89.2 L283.0 89.6 L284.5 88.7 L286.0 90.9 L287.6 91.0 L289.1 90.8 L290.6 91.4 L292.2 93.0 L293.7 93.4 L295.2 93.1 L296.7 93.1 L298.3 94.7 L299.8 93.9 L301.3 93.9 L302.9 94.5 L304.4 96.1 L306.0 95.8 L307.5 96.9 L309.1 95.2 L310.7 97.1 L312.3 97.4 L313.8 96.5 L315.4 98.1 L317.0 97.1 L318.6 98.5 L320.1 97.8 L321.7 98.1 L323.3 98.5 L324.9 99.2 L326.4 98.6 L328.0 99.1 L329.5 99.8 L331.0 98.8 L332.6 99.9 L334.1 99.9 L335.6 99.6 L337.1 100.2 L338.6 100.4 L340.2 100.7 L341.7 101.3 L343.2 101.8 L344.7 102.5 L346.2 102.1 L347.8 102.9 L349.3 101.5 L350.8 103.1 L352.3 102.7 L353.8 103.4 L355.4 102.9 L356.9 103.7 L358.4 104.5 L359.9 103.1 L361.4 103.5 L363.0 105.2 L364.5 103.8 L366.0 103.9 L367.5 105.1 L369.0 104.2 L370.6 105.3 L372.1 104.0 L373.6 105.5 L375.1 105.9 L376.6 105.1 L378.2 105.1 L379.7 104.5 L381.2 105.4 L382.7 105.8 L384.2 104.7 L385.8 105.2 L387.3 105.0 L388.8 106.6 L390.3 105.8 L391.8 106.8 L393.4 106.2 L394.9 105.1 L396.4 106.8 L397.9 106.4 L399.4 106.9 L401.0 107.3 L402.5 106.8 L404.0 107.1" fill="none" stroke="#38a8e4" stroke-width="2.600" filter="url(#bl1)" opacity=".7"/><rect x="0" y="0" width="404.1" height="131.5" filter="url(#spk2)" opacity=".38"/><rect x="0" y="114.5" width="404.1" height="16" fill="#1a44aa" opacity=".35"/></g><rect x="0" y="128" width="404.1" height="126.6" fill="url(#bands)"/><rect x="39.91" y="100" width="1" height="154.6" fill="#ffffff" opacity=".07"/><rect x="80.32" y="100" width="1" height="154.6" fill="#ffffff" opacity=".07"/><rect x="120.73" y="100" width="1" height="154.6" fill="#ffffff" opacity=".07"/><rect x="161.14" y="100" width="1" height="154.6" fill="#ffffff" opacity=".07"/><rect x="201.55" y="100" width="1" height="154.6" fill="#ffffff" opacity=".07"/><rect x="241.96" y="100" width="1" height="154.6" fill="#ffffff" opacity=".07"/><rect x="282.37" y="100" width="1" height="154.6" fill="#ffffff" opacity=".07"/><rect x="322.78" y="100" width="1" height="154.6" fill="#ffffff" opacity=".07"/><rect x="363.19" y="100" width="1" height="154.6" fill="#ffffff" opacity=".07"/><clipPath id="colc"><path d="M195.5 131.0 L195.7 100.0 L196.4 70.0 L197.4 48.0 L198.6 30.0 L199.8 15.0 L201.0 3.0 L202.0 -1.0 L202.0 -1.0 L203.0 3.0 L204.2 15.0 L205.4 30.0 L206.6 48.0 L207.6 70.0 L208.3 100.0 L208.5 131.0 Z"/></clipPath><path d="M195.5 131.0 L195.7 100.0 L196.4 70.0 L197.4 48.0 L198.6 30.0 L199.8 15.0 L201.0 3.0 L202.0 -1.0 L202.0 -1.0 L203.0 3.0 L204.2 15.0 L205.4 30.0 L206.6 48.0 L207.6 70.0 L208.3 100.0 L208.5 131.0 Z" fill="#1d4ab2"/><g clip-path="url(#colc)"><rect x="194.0" y="18" width="16" height="114" filter="url(#spk3)" opacity=".8"/></g><path d="M195.5 131.0 L195.7 100.0 L196.4 70.0 L197.4 48.0 L198.6 30.0 L199.8 15.0 L201.0 3.0 L202.0 -1.0 L202.0 -1.0 L203.0 3.0 L204.2 15.0 L205.4 30.0 L206.6 48.0 L207.6 70.0 L208.3 100.0 L208.5 131.0 Z" fill="none" stroke="#36b6e6" stroke-width=".8" opacity=".75"/><path d="M200.8 -1 L203.2 -1 L203.8 8 L200.2 8 Z" fill="#44c070"/><g filter="url(#bl1)"><rect x="199.5" y="127" width="5" height="5" fill="#38c8a0" opacity=".8"/><rect x="199.5" y="132" width="5" height="9" fill="#b0dc38" opacity=".55"/><rect x="200.0" y="141" width="4" height="6" fill="#f0a028" opacity=".7"/><rect x="200.5" y="158" width="3" height="12" fill="#f08a20" opacity=".6"/></g><rect x="201.0" y="170" width="2" height="80" fill="#ffffff" opacity=".10"/><g mask="url(#mfade)"><rect x="0" y="208" width="404.1" height="47" filter="url(#spk)"/></g></svg>
<div class="a" style="left:2px;top:769.200px;width:1060px;height:11px;background:#f0f0f0;border-top:1px solid #fbfbfb"></div>
<div class="a" style="left:2px;top:771.500px;width:1060px;height:1px;background:#d0d0d0"></div>
<div class="t" style="left:5px;top:774.500px">Stopped</div>
<div class="t" style="left:119px;top:774.500px">Acq BW: 110.00 MHz, Acq Length: 133.136 us</div>
<div class="t" style="left:407px;top:774.500px">Real Time</div>
<div class="t" style="left:477px;top:774.500px">Power</div>
<div class="t" style="left:579px;top:774.500px">Ref: Int</div>
<div class="t" style="left:633px;top:774.500px">Atten: 20 dB</div>
<div class="a" style="left:116px;top:773px;width:1px;height:7px;background:#b4b4b4"></div>
<div class="a" style="left:403px;top:773px;width:1px;height:7px;background:#b4b4b4"></div>
<div class="a" style="left:474px;top:773px;width:1px;height:7px;background:#b4b4b4"></div>
<div class="a" style="left:574px;top:773px;width:1px;height:7px;background:#b4b4b4"></div>
<div class="a" style="left:628px;top:773px;width:1px;height:7px;background:#b4b4b4"></div>
<div class="a" style="left:715px;top:773px;width:1px;height:7px;background:#b4b4b4"></div>
<div class="a" style="left:771px;top:773px;width:1px;height:7px;background:#b4b4b4"></div>
<div class="a" style="left:829px;top:773px;width:1px;height:7px;background:#b4b4b4"></div>
</body></html>
